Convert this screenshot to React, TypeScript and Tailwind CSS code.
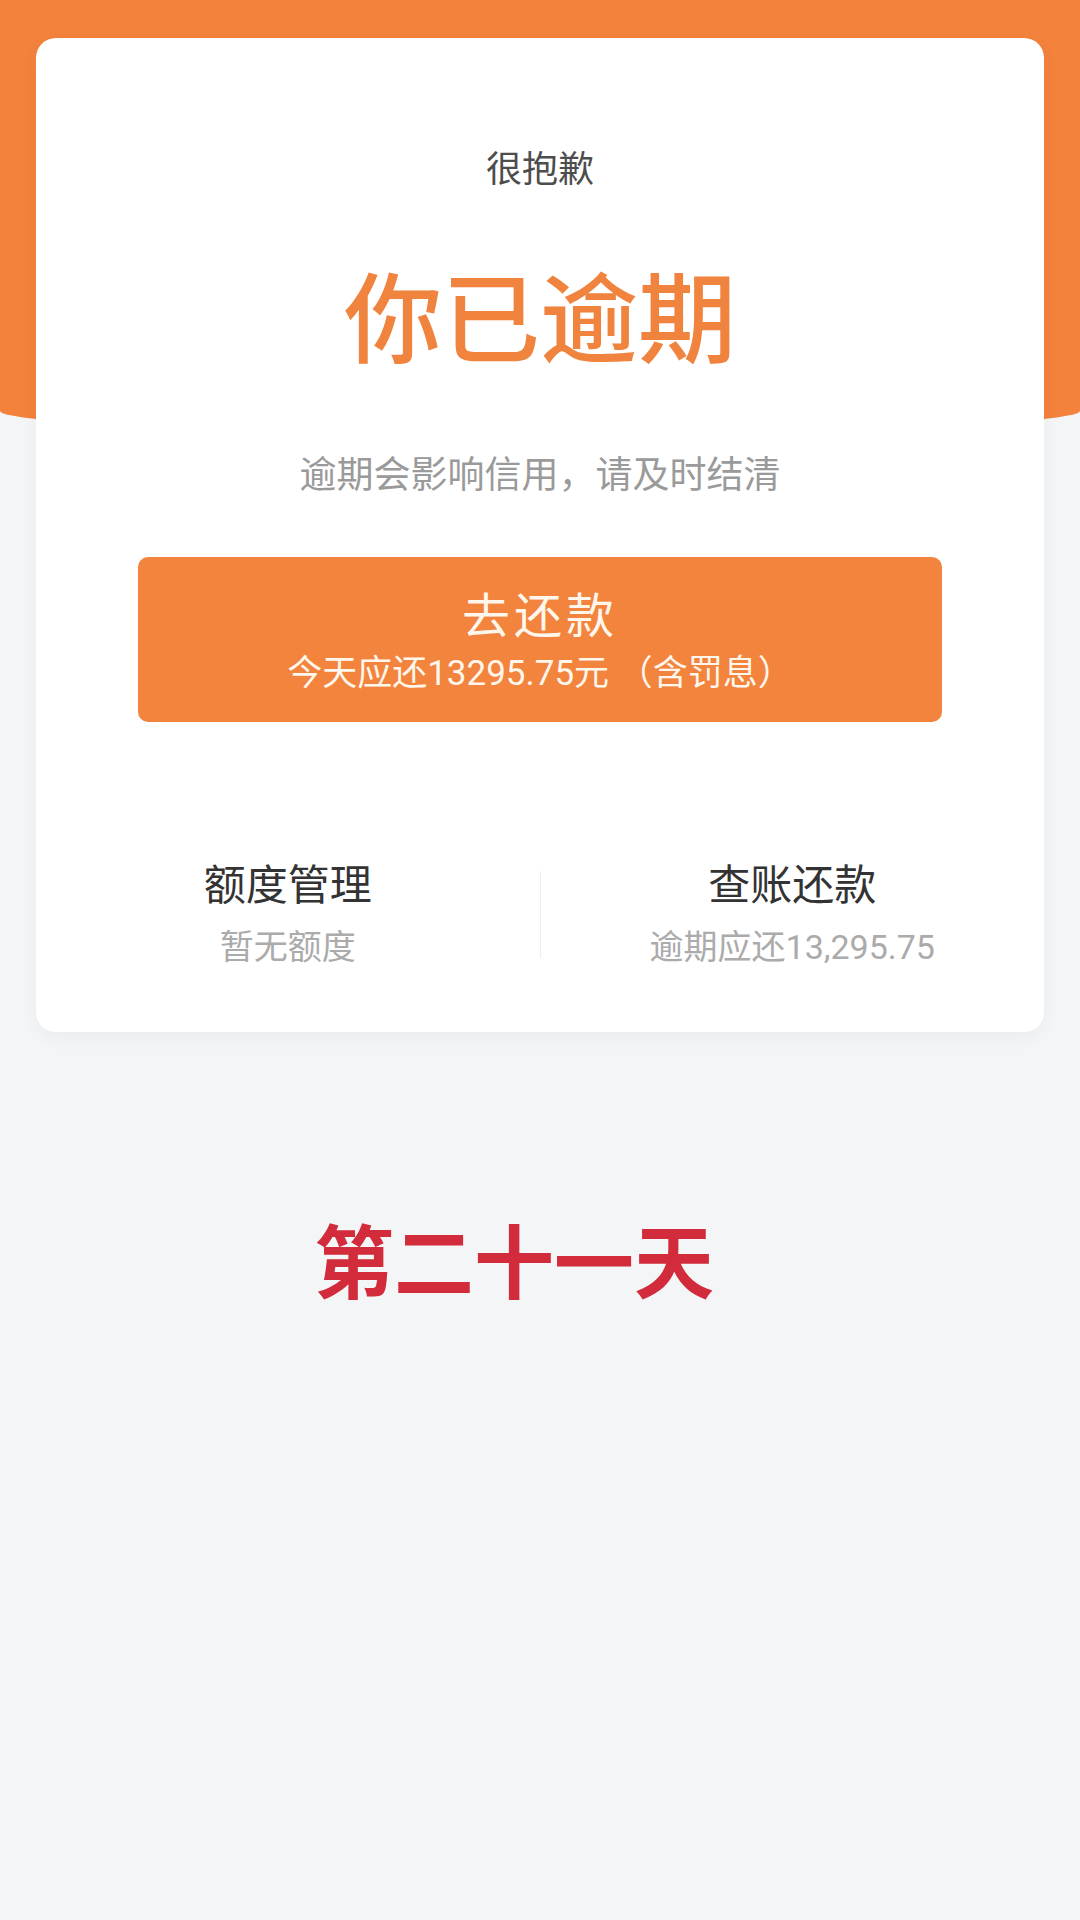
import React from "react";

const FONT = { fontFamily: 'Roboto, "Noto Sans CJK SC", "Noto Sans", sans-serif' };

export default function App() {
  return (
    <div className="min-h-[1920px] w-[1080px] bg-[#F4F5F7]" style={FONT}>
      <div className="h-[433px] w-full bg-[#F3823D] rounded-b-[50%_22px]" />
      <div className="mx-[36px] mt-[-395px] rounded-[20px] bg-white pt-[114px] pb-[68px] shadow-[0_6px_20px_rgba(0,0,0,0.04)]">
        <div className="text-center text-[36px] leading-none text-[#4d4d4d]">很抱歉</div>
        <div className="mt-[85px] text-center text-[98px] leading-none font-medium text-[#F0843E]">你已逾期</div>
        <div className="mt-[86px] text-center text-[37px] leading-none text-[#9a9a9a]">逾期会影响信用，请及时结清</div>
        <div className="mx-[102px] mt-[63px] flex h-[165px] flex-col items-center rounded-[10px] bg-[#F2843E] pt-[36px]">
          <div className="text-[48px] leading-none tracking-[4px] text-[#FFF6EC]">去还款</div>
          <div className="mt-[15px] text-[35px] leading-none text-[#FFF6EC]">今天应还13295.75元 （含罚息）</div>
        </div>
        <div className="mt-[143px] flex items-center">
          <div className="flex flex-1 flex-col items-center">
            <div className="text-[42px] leading-none text-[#333333]">额度管理</div>
            <div className="mt-[23px] text-[34px] leading-none text-[#ababab]">暂无额度</div>
          </div>
          <div className="h-[87px] w-px bg-[#EEEEEE]" />
          <div className="flex flex-1 flex-col items-center">
            <div className="text-[42px] leading-none text-[#333333]">查账还款</div>
            <div className="mt-[23px] text-[34px] leading-none text-[#ababab]">逾期应还13,295.75</div>
          </div>
        </div>
      </div>
      <div className="mt-[193px] flex justify-center pr-[52px]">
        <div className="text-[80px] leading-none font-bold text-[#D22B3B]">第二十一天</div>
      </div>
    </div>
  );
}
